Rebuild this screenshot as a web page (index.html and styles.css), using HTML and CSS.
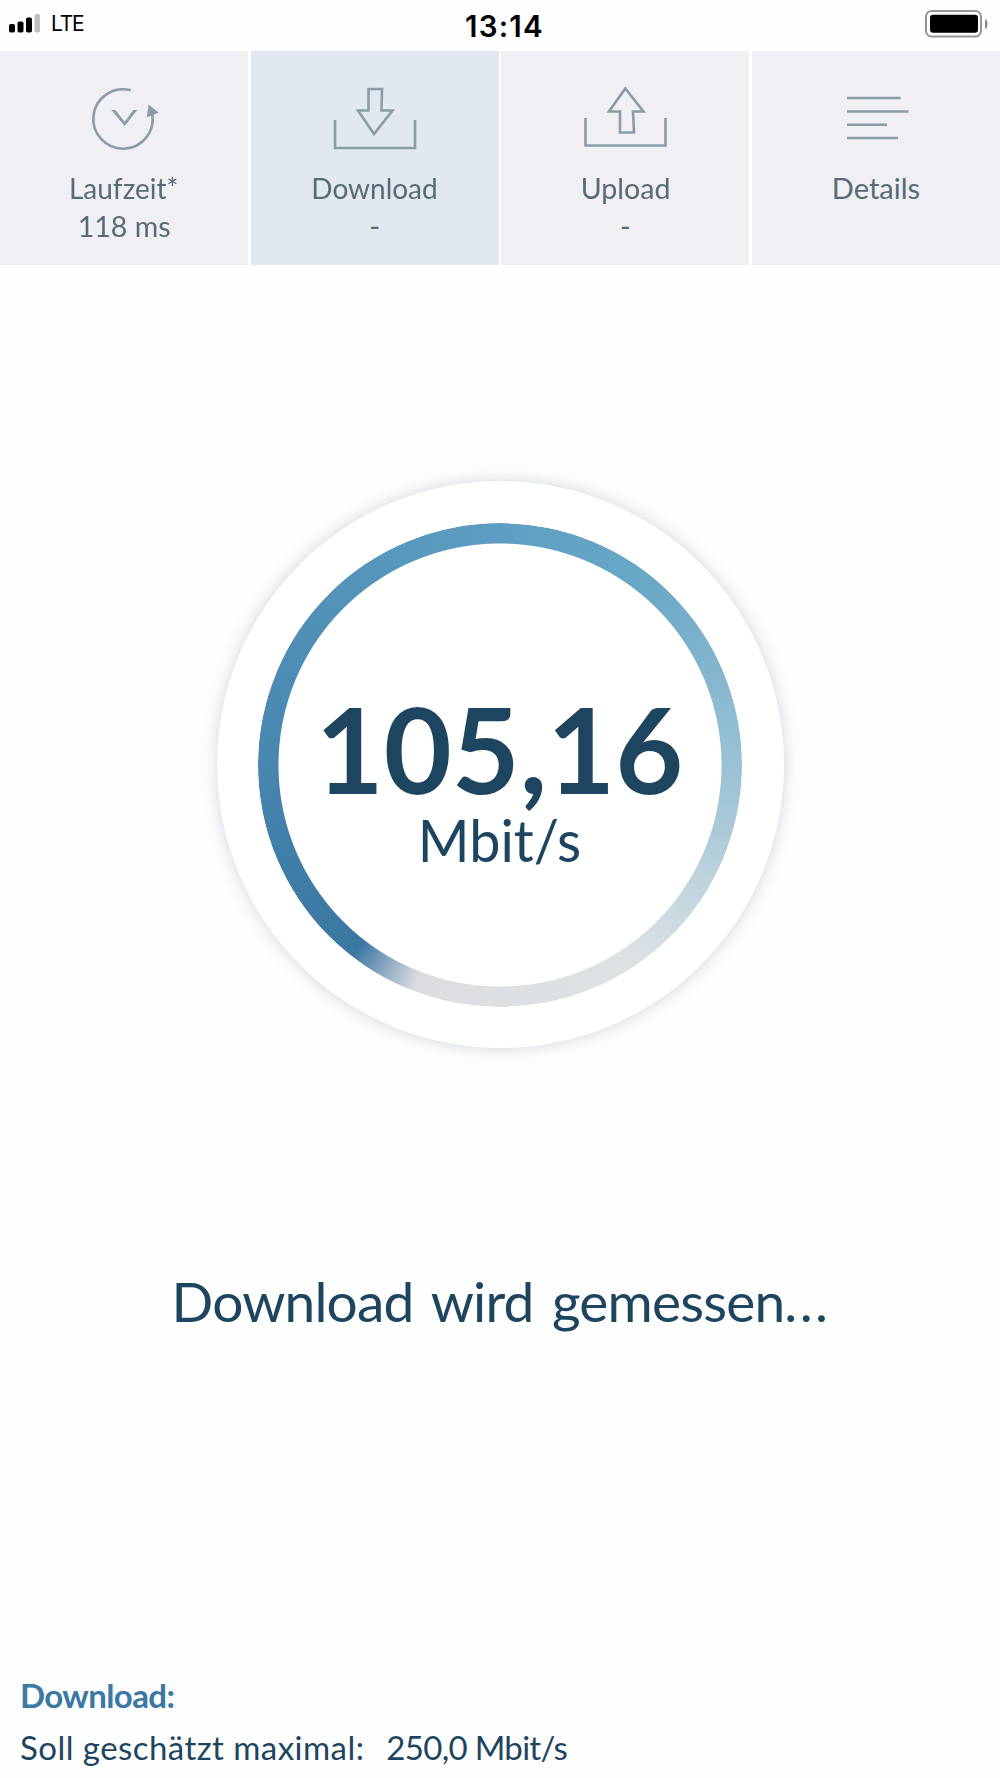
FILE: index.html
```html
<!DOCTYPE html>
<html lang="de">
<head>
<meta charset="utf-8">
<title>Download</title>
<link rel="stylesheet" href="styles.css">
</head>
<body>
<header class="status">
  <div class="carrier">
    <svg width="32" height="20" viewBox="0 0 32 20"><rect x="0" y="10" width="6" height="8.500" rx="1.800"/><rect x="8.500" y="7.500" width="6" height="11" rx="1.800"/><rect x="17" y="3.500" width="6" height="15" rx="1.800"/><rect x="25.500" y="0" width="5.500" height="18.500" rx="1.800" fill="#bfbfbf"/></svg>
    <span class="lte">LTE</span>
  </div>
  <div class="time">13:14</div>
  <svg class="battery" width="64" height="28" viewBox="0 0 64 28"><rect x="1" y="1" width="55" height="25.500" rx="5.500" fill="none" stroke="#969696" stroke-width="2"/><rect x="5" y="4.800" width="48" height="18" rx="3"/><path d="M60 9c3.500 1.500 3.500 8.500 0 10z" fill="#8a8a8a"/></svg>
</header>
<nav class="tabs">
  <div class="tab">
    <svg class="icon" viewBox="0 0 90 80"><path d="M51.700 10.300A29.700 29.700 0 1 0 73.300 34"/><path class="solid" d="M32.300 30h4L45.700 41.700 54.300 30h4L45.700 46z"/><path class="solid" d="M69.700 24.500l10 8.300-12 4.500z"/></svg>
    <span class="label laufzeit">Laufzeit*</span>
    <span class="label ms">118 ms</span>
  </div>
  <div class="tab active">
    <svg class="icon" viewBox="0 0 90 80"><path d="M5 40v28h80V40"/><path d="M38.500 9H52L51.500 30.500H62.500L44 54 28 30.500H38.500z"/></svg>
    <span class="label download">Download</span>
    <span class="label">-</span>
  </div>
  <div class="tab">
    <svg class="icon" viewBox="0 0 90 80"><path d="M5.500 38v27.500h80V38"/><path d="M45.300 8.500L63.500 31.500H53L54 52.500H40V31.500H29z"/></svg>
    <span class="label upload">Upload</span>
    <span class="label">-</span>
  </div>
  <div class="tab">
    <svg class="icon" viewBox="0 0 90 80"><path d="M16 18h53.500M16 31.500h61.500M16 44.700h40M16 58h51"/></svg>
    <span class="label details">Details</span>
  </div>
</nav>
<main class="measure">
  <div class="dial">
    <div class="ring"></div>
    <div class="reading">
      <div class="value">105,16</div>
      <div class="unit">Mbit/s</div>
    </div>
  </div>
  <h1 class="message">Download wird gemessen<span class="dots">...</span></h1>
</main>
<footer class="summary">
  <div class="title">Download:</div>
  <div class="row"><span class="key">Soll geschätzt maximal:</span><span class="amount">250,0 Mbit/s</span></div>
</footer>
</body>
</html>
```
FILE: styles.css
```css
* { box-sizing: border-box; }
body {
  margin: 0;
  width: 1000px;
  height: 1778px;
  display: flex;
  flex-direction: column;
  background: #fefefe;
  color: #1e455f;
  font-family: Lato, "Noto Sans", sans-serif;
  overflow: hidden;
}
.status {
  height: 51px;
  display: grid;
  grid-template-columns: 1fr auto 1fr;
  padding: 0 11px 0 9px;
  color: #000;
  font-family: Inter, "Liberation Sans", sans-serif;
}
.carrier { display: flex; gap: 10px; padding-top: 14px; }
.lte { font-size: 21px; line-height: 20px; letter-spacing: -1.2px; }
.time { font-size: 29.5px; font-weight: 600; line-height: 52px; letter-spacing: 1.2px; padding-left: 11px; }
.battery { justify-self: end; margin-top: 10px; }
.tabs {
  height: 214px;
  display: grid;
  grid-template-columns: repeat(4, 1fr);
  gap: 2.6px;
}
.tab {
  background: #efeff4;
  display: flex;
  flex-direction: column;
  align-items: center;
  padding-top: 29px;
  color: #566b74;
}
.tab.active { background: #e1e8f2; }
.icon {
  width: 90px;
  height: 80px;
  margin-bottom: 9px;
  fill: none;
  stroke: #8a9da7;
  stroke-width: 2.6;
}
.icon .solid { fill: #8a9da7; stroke: none; }
.label { font-size: 29px; line-height: 37.5px; white-space: nowrap; }
.laufzeit, .download { transform: scaleX(0.965); }
.ms, .upload { transform: scaleX(0.985); }
.measure {
  display: flex;
  flex-direction: column;
  align-items: center;
  height: 1393px;
  padding-top: 216px;
}
.dial {
  width: 567px;
  height: 567px;
  border-radius: 50%;
  background: #fff;
  box-shadow: 0 0 17px rgba(40, 75, 105, 0.22);
  display: grid;
  place-items: center;
}
.ring, .reading { grid-area: 1 / 1; }
.ring {
  width: 484px;
  height: 484px;
  border-radius: 50%;
  background: conic-gradient(#5f9ec2 0deg, #69a8c7 40deg, #83b5ce 65deg, #9ac2d5 90deg, #adcbd8 108deg, #c2d5de 122deg, #d3dde3 137deg, #dce1e3 145deg, #dce0e2 180deg, #dcdce0 201deg, #3a76a2 218deg, #417fab 250deg, #4887b0 272deg, #5090b7 305deg, #5f9ec2 360deg);
  mask: radial-gradient(circle, transparent 221px, #000 222px);
}
.reading { text-align: center; padding: 38px 2px 0 0; }
.value { font-size: 119px; line-height: 112px; font-weight: 700; transform: scaleX(0.985); }
.unit { font-size: 59px; line-height: 72px; transform: scaleX(0.945); }
.message { margin: 220px 0 0; font-size: 55px; line-height: 66px; font-weight: 400; letter-spacing: -0.8px; word-spacing: 5px; white-space: nowrap; }
.dots { letter-spacing: 2.4px; margin-right: -2px; }
.summary { padding: 11px 20px 0; font-size: 33px; line-height: 52px; }
.title { font-weight: 700; color: #3b78a4; letter-spacing: -0.6px; }
.row { display: flex; gap: 22px; white-space: nowrap; }
.key { letter-spacing: 0.45px; }
.amount { letter-spacing: -0.7px; }
```
